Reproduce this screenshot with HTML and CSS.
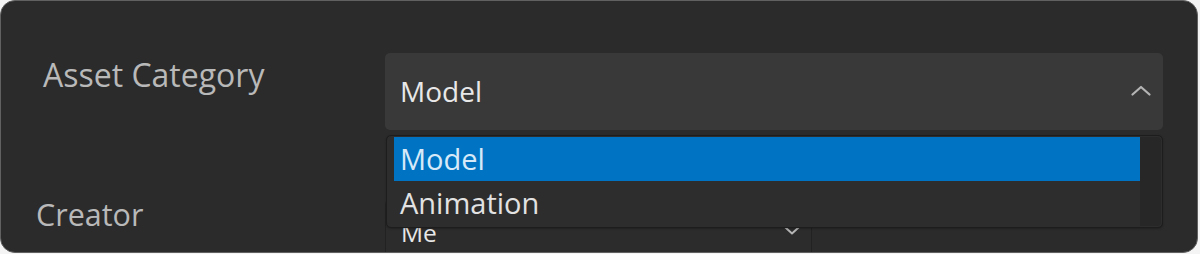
FILE: index.html
```html
<!DOCTYPE html>
<html lang="en">
<head>
<meta charset="utf-8">
<title>Asset settings</title>
<link rel="stylesheet" href="styles.css">
</head>
<body>
<div class="panel">
  <div class="row">
    <div class="label label-first">Asset Category</div>
    <div class="field">
      <div class="select">
        <span class="select-value">Model</span>
        <svg class="chev-up" width="20" height="11" viewBox="0 0 20 11"><path d="M1.5 9.5 L10 2 L18.5 9.5" fill="none" stroke="#b4b4b4" stroke-width="2.2" stroke-linecap="round" stroke-linejoin="round"/></svg>
      </div>
      <div class="menu">
        <div class="menu-items">
          <div class="item item-active">Model</div>
          <div class="item">Animation</div>
        </div>
        <div class="scroll-track"></div>
      </div>
    </div>
  </div>
  <div class="row row-second">
    <div class="label label-second">Creator</div>
    <div class="field">
      <div class="select select-small">
        <span class="select-value select-value-small">Me</span>
        <svg class="chev-down" width="16" height="9" viewBox="0 0 16 9"><path d="M1.5 1.5 L8 7.5 L14.5 1.5" fill="none" stroke="#b4b4b4" stroke-width="2" stroke-linecap="round" stroke-linejoin="round"/></svg>
      </div>
    </div>
  </div>
</div>
</body>
</html>
```

FILE: styles.css
```css
* { box-sizing: border-box; }
html, body {
  margin: 0;
  padding: 0;
  background: #f4f4f4;
  height: 254px;
  overflow: hidden;
}
body {
  font-family: "Open Sans", "Noto Sans", sans-serif;
}
.panel {
  width: 1198px;
  height: 253px;
  background: #2b2b2b;
  border: 1px solid #616161;
  border-radius: 15px;
  padding: 52px 34px 0 35px;
  overflow: hidden;
}
.row {
  display: grid;
  grid-template-columns: 349px 778px;
  align-items: start;
}
.row-second {
  margin-top: 64px;
}
.label {
  color: #b9b9b9;
  line-height: 1.362;
  white-space: nowrap;
}
.label-first {
  font-size: 32px;
  padding-left: 7px;
}
.label-second {
  font-size: 30.5px;
}
.field {
  position: relative;
}
.select {
  height: 77px;
  background: #393939;
  border-radius: 5px;
  display: flex;
  align-items: center;
  justify-content: space-between;
  padding: 0 12px 0 15px;
}
.select-value {
  color: #e8e8e8;
  font-size: 28px;
  line-height: 1.362;
}
.chev-up {
  margin-top: -2px;
}
.select-small {
  width: 427px;
  height: 60px;
  margin-top: 6px;
  background: #2c2c2c;
  border: 1px solid #222222;
  border-radius: 4px;
  padding: 0 11px 0 15px;
}
.select-value-small {
  font-size: 24.5px;
  margin-top: 6px;
}
.menu {
  position: absolute;
  top: 82px;
  left: 1px;
  width: 777px;
  height: 93px;
  background: #2d2d2d;
  border: 1px solid #1d1d1d;
  border-radius: 5px;
  display: flex;
  padding: 1px 1px 1px 7px;
  z-index: 5;
  box-shadow: 0 1px 2px rgba(0,0,0,0.25);
}
.menu-items {
  flex: 1;
}
.item {
  height: 44px;
  display: flex;
  align-items: center;
  padding-left: 6px;
  font-size: 29px;
  line-height: 1.362;
  color: #e2e2e2;
}
.item-active {
  background: #0074c3;
  color: #d6e9f8;
}
.scroll-track {
  width: 21px;
  background: #272727;
  border-radius: 0 4px 4px 0;
}
```
